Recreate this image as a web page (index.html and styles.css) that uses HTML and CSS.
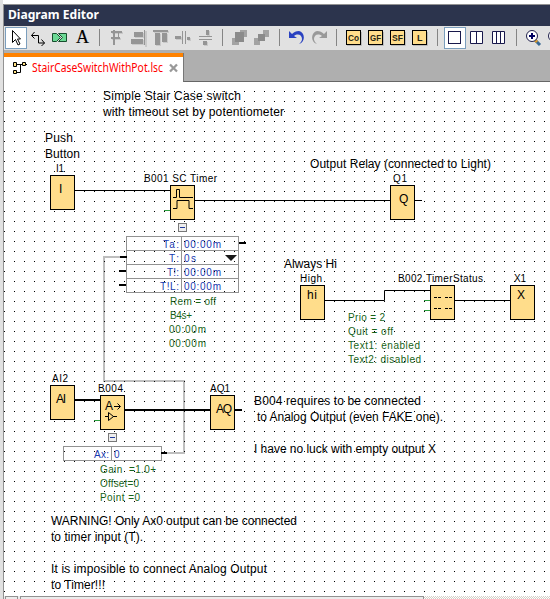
FILE: index.html
```html
<!DOCTYPE html>
<html lang="en">
<head>
<meta charset="utf-8">
<title>Diagram Editor</title>
<link rel="stylesheet" href="styles.css">
</head>
<body>
<main class="window">
  <header class="title"><svg width="120" height="21"><text x="4" y="14" textLength="91" lengthAdjust="spacingAndGlyphs">Diagram Editor</text></svg></header>
  <nav class="toolbar">
    <svg width="546" height="24" viewBox="4 26 546 24">
      <g class="selected"><rect x="5.5" y="27.5" width="21" height="21"/><rect x="444.500" y="27.500" width="21" height="21"/></g>
      <path d="M12.500 30.500V42.500l3-3 2.500 5.500 2-1-2.500-5H20.500z" fill="#fff" stroke="#000"/>
      <path d="M34.500 32l-3 3.500 3 3M31.500 35.500h7v7.500h6M41.500 39.500l3 3.500-3 3" fill="none" stroke="#000"/>
      <path d="M52.500 33.500h4l4 4-4 4h-4zM58.500 33.500h8v8h-8l4-4z" fill="#6bd894" stroke="#174d2d"/>
      <text class="serif" x="76" y="43" textLength="13" lengthAdjust="spacingAndGlyphs">A</text>
      <path class="divider" d="M99.500 29v17M222.500 29v17M279.500 29v17M336.500 29v17M437.500 29v17M516.500 29v17"/>
      <g class="shadow" transform="translate(1 1)"><path d="M134 32h9v5h-9zM131 39h12v5h-12zM144 30h2v16h-2zM153 30h15v2h-15zM155 33h5v12h-5zM162 33h5v9h-5zM175 36h6v3h-6zM187 37h3v3h-3zM206 30h3v5h-3zM203 41h4v4h-4zM111 31h11v2h-11zM111 37h9v2h-9z"/></g>
      <g class="muted">
        <path d="M113 30h2v15h-2zM111 31h11v2h-11zM111 37h9v2h-9zM118 31h1v8h-1z"/>
        <path d="M134 32h9v5h-9zM131 39h12v5h-12zM144 30h1v15h-1z"/>
        <path d="M153 30h15v2h-15zM155 33h5v12h-5zM162 33h5v9h-5z"/>
        <path d="M175 36h6v3h-6zM182 31h1v13h-1zM185 31h1v13h-1zM187 37h3v3h-3z"/>
        <path d="M199 36h13v1h-13zM199 39h13v1h-13zM206 30h3v5h-3zM203 41h4v4h-4z"/>
      </g>
      <g class="stack"><path d="M232 38h7v7h-7zM240 30h7v7h-7z"/><path class="front" d="M235 32h9v10h-9z"/><path d="M254 38h6v7h-6zM263 30h6v7h-6z"/><path class="front" d="M258 34h7v7h-7z"/></g>
      <path d="M289 31v7h8l-3-2c4-3 8-1 8 3 0 2-1 3-3 5 7-2 6-12 0-13-3 0-5 1-7 3z" fill="#2a42c1"/>
      <path d="M327 31v7h-8l3-2c-4-3-8-1-8 3 0 2 1 3 3 5-7-2-6-12 0-13 3 0 5 1 7 3z" fill="#999"/>
      <path class="chip-shadow" d="M347 45.500h14.500V32M369 45.500h14.500V32M391 45.500h14.500V32M413 45.500h14.500V32"/>
      <g class="chip"><rect x="346.500" y="30.500" width="14" height="14"/><rect x="368.500" y="30.500" width="14" height="14"/><rect x="390.500" y="30.500" width="14" height="14"/><rect x="412.500" y="30.500" width="14" height="14"/></g>
      <g class="chip-text"><text x="348" y="41" textLength="11" lengthAdjust="spacingAndGlyphs">Co</text><text x="370" y="41" textLength="11" lengthAdjust="spacingAndGlyphs">GF</text><text x="392" y="41" textLength="11" lengthAdjust="spacingAndGlyphs">SF</text><text x="417" y="41" textLength="5">L</text></g>
      <g class="pages"><rect x="448.500" y="31.500" width="12" height="12"/><path d="M470.500 31.500h12v12h-12zM476.500 31v13M492.500 31.500h12v12h-12zM496.500 31v13M500.500 31v13"/></g>
      <path d="M535 40l5 5" stroke="#396893" stroke-width="3"/><path d="M535 40l2 2" stroke="#dc9a28" stroke-width="3"/>
      <circle cx="532" cy="36" r="5.500" fill="#fff" stroke="#20204b"/><path d="M529 36h6M532 33v6" stroke="#000060" stroke-width="2"/>
      <circle cx="554" cy="36" r="5.500" fill="#fff" stroke="#20204b"/>
    </svg>
  </nav>
  <div class="tabs">
    <div class="tab">
      <svg width="179" height="25" viewBox="4 57 179 25">
        <path d="M15 64.500h10M20.500 64v8.500h-4M21 64.500h6" fill="none" stroke="#000"/>
        <path d="M13.500 62.500h3v4h-3zM22.500 62.500h3v3h-3zM13.500 70.500h3v3h-3z" fill="#ffe080" stroke="#000"/>
        <text x="32" y="72" textLength="131" lengthAdjust="spacingAndGlyphs">StairCaseSwitchWithPot.lsc</text>
        <path d="M170 64.500l7 7M177 64.500l-7 7" stroke="#999" stroke-width="2.300"/>
      </svg>
    </div>
    <div class="tab-space"></div>
  </div>
  <section class="canvas">
    <svg width="546" height="514" viewBox="4 82 546 514">
      <defs><pattern id="dots" x="4" y="1" width="10" height="10" patternUnits="userSpaceOnUse"><rect width="1" height="1"/></pattern></defs>
      <g class="notes">
        <text x="103" y="100" textLength="138">Simple Stair Case switch</text>
        <text x="103" y="116" textLength="181">with timeout set by potentiometer</text>
        <text x="45" y="142" textLength="28">Push</text>
        <text x="45" y="158" textLength="35">Button</text>
        <text x="310" y="168" textLength="181">Output Relay (connected to Light)</text>
        <text x="284" y="268" textLength="53">Always Hi</text>
        <text x="254" y="405" textLength="167">B004 requires to be connected</text>
        <text x="257" y="421" textLength="186">to Analog Output (even FAKE one).</text>
        <text x="254" y="453" textLength="182">I have no luck with empty output X</text>
        <text x="51" y="525" textLength="246">WARNING! Only Ax0 output can be connected</text>
        <text x="51" y="541" textLength="92">to timer input (T).</text>
        <text x="51" y="573" textLength="216">It is imposible to connect Analog Output</text>
        <text x="51" y="589" textLength="54">to Timer!!!</text>
      </g>
      <g class="labels">
        <text x="56" y="172" textLength="8">I1</text><text x="144" y="182" textLength="73">B001 SC Timer</text>
        <text x="393" y="182" textLength="14">Q1</text><text x="300" y="282" textLength="22">High</text>
        <text x="398" y="282" textLength="85">B002.TimerStatus</text><text x="514" y="282" textLength="12">X1</text>
        <text x="52" y="382" textLength="16">AI2</text><text x="98" y="392" textLength="25">B004</text><text x="210" y="392" textLength="20">AQ1</text>
      </g>
      <g class="properties">
        <text x="170" y="305" textLength="46">Rem = off</text><text x="170" y="319" textLength="22">B4s+</text>
        <text x="169" y="333" textLength="37">00:00m</text><text x="169" y="347" textLength="37">00:00m</text>
        <text x="348" y="321" textLength="37">Prio = 2</text><text x="348" y="335" textLength="45">Quit = off</text>
        <text x="348" y="349" textLength="72">Text1: enabled</text><text x="348" y="363" textLength="73">Text2: disabled</text>
        <text x="100" y="473" textLength="56" xml:space="preserve">Gain  =1.0+</text><text x="100" y="487" textLength="39">Offset=0</text><text x="100" y="501" textLength="40">Point =0</text>
      </g>
      <path class="link" d="M122 257H104V381H184V453H167"/>
      <g class="table"><rect x="126.500" y="236.500" width="112" height="56"/><path d="M126 250.500h113M126 264.500h113M126 278.500h113M181.500 236v57"/><rect x="63.500" y="446.500" width="98" height="14"/><path d="M111.500 446v15"/></g>
      <g class="values">
        <text x="163" y="248" textLength="16">Ta:</text><text x="184" y="248" textLength="37">00:00m</text>
        <text x="169" y="262" textLength="10">T:</text><text x="184" y="262" textLength="12">0s</text>
        <text x="167" y="276" textLength="12">T!:</text><text x="184" y="276" textLength="37">00:00m</text>
        <text x="160" y="290" textLength="19">T!L:</text><text x="184" y="290" textLength="37">00:00m</text>
        <text x="94" y="458" textLength="15">Ax:</text><text x="114" y="458">0</text>
      </g>
      <rect x="4" y="82" width="546" height="514" fill="url(#dots)"/>
      <path d="M225 255h12l-6 6z" fill="#181818"/>
      <path class="wire" d="M75 190.500h95M195 200.500h195M415 200.500h7M325 300.500h59.500v-10H430M455 300.500h55"/>
      <path class="bus" d="M75 400h25M125 410h85M235 410h7M239 243h7M120 257h7M119 271h7M119 285h7M161 453h6"/>
      <path class="trigger" d="M164 210.500h6M424 300.500h6M424 310.500h6M94 420.500h6"/>
      <g class="block">
        <rect x="50.500" y="175.500" width="24" height="34"/><rect x="170.500" y="185.500" width="24" height="34"/><rect x="390.500" y="185.500" width="24" height="34"/>
        <rect x="300.500" y="285.500" width="24" height="34"/><rect x="430.500" y="285.500" width="24" height="34"/><rect x="510.500" y="285.500" width="24" height="34"/>
        <rect x="50.500" y="385.500" width="24" height="34"/><rect x="100.500" y="395.500" width="24" height="34"/><rect x="210.500" y="395.500" width="24" height="34"/>
      </g>
      <path class="wire" d="M173 197.500h3.500v-8h3v8H193M173 208.500h4v-8h12v8h4M434 297.500h3M438 297.500h3M445 297.500h3M449 297.500h3M434 308.500h3M438 308.500h3M445 308.500h3M449 308.500h3"/>
      <path d="M114 406.500h6M117.500 403.500l3 3-3 3M105 416.500h3.500v-4l5 4-5 4v-4M113 416.500h4" fill="none" stroke="#000"/>
      <g class="symbols"><text x="59" y="193">I</text><text x="399" y="203">Q</text><text x="307" y="299" textLength="10">hi</text><text x="517" y="299">X</text><text x="56" y="403" textLength="10">AI</text><text x="105" y="410" textLength="8">A</text><text x="216" y="413" textLength="16">AQ</text></g>
      <g class="collapse"><rect x="178.500" y="223.500" width="8" height="8"/><rect x="108.500" y="433.500" width="8" height="8"/><path d="M180 227.500h5M110 437.500h5"/></g>
    </svg>
  </section>
  <footer class="scrollbar"><span class="arrow"></span><span class="thumb"></span><span class="track"></span></footer>
</main>
</body>
</html>
```
FILE: styles.css
```css
* { box-sizing: border-box; }
body { margin: 0; overflow: hidden; background: #fff; }
svg { display: block; font-family: "Liberation Sans", sans-serif; }
.window { width: 550px; height: 599px; padding-top: 4px; display: flex; flex-direction: column; border-left: 3px solid #e1e1e1; background: #fff; }
.window > * { border-left: 1px solid #929292; flex-shrink: 0; }
.title { height: 22px; border-top: 1px solid #929292; background: #2c344d; }
.title text { fill: #fff; font: bold 13px "Noto Sans", sans-serif; }
.toolbar { height: 24px; background: #e1e1e1; }
.tabs { height: 32px; padding-top: 3px; display: flex; background: #afafaf; }
.tab { width: 179px; border-top: 4px solid #ff8200; background: #fff; }
.tab text { fill: #f00; font: 12px "Noto Sans", sans-serif; }
.tab-space { flex: 1; border-left: 1px solid #777; border-bottom: 1px solid #666; }
.canvas { height: 514px; }
.scrollbar { height: 3px; display: flex; padding-left: 1px; background: #ececec; }
.arrow { width: 13px; margin-right: 2px; border: 1px solid #929292; border-bottom: 0; }
.thumb { width: 404px; border: 1px solid #929292; border-bottom: 0; }
.track { flex: 1; background: repeating-conic-gradient(#d4d0c8 0 25%, #fff 0 50%) 0 0 / 2px 2px; }
.selected { fill: #fff; stroke: #7b9ebd; }
.serif { font: 18px "Liberation Serif", serif; stroke: #000; stroke-width: .2; }
.divider { stroke: #858585; }
.muted { fill: #959595; }
.shadow { fill: #c9c9c9; }
.stack { fill: #a3a3a3; }
.front { fill: #8b8b8b; }
.chip { fill: #ffdd8b; stroke: #000; }
.chip-shadow { fill: none; stroke: #bbb; }
.chip-text { font: bold 9px "Liberation Sans", sans-serif; fill: #262615; }
.pages { fill: #fff; stroke: #18184b; }
.notes { font-size: 12px; }
.labels, .properties, .values { font: 10px "Liberation Sans", sans-serif; }
.properties { fill: #176417; }
.values { fill: #1939af; }
.link { fill: none; stroke: #bebebe; stroke-width: 2; }
.table { fill: none; stroke: #929292; }
.wire { fill: none; stroke: #000; }
.bus { stroke: #000; stroke-width: 2; }
.trigger { stroke: #299b3a; }
.block { fill: #ffdd8b; stroke: #000; }
.symbols { font: 12px "Liberation Sans", sans-serif; }
.collapse { fill: #eee; stroke: #777; }
.collapse path { stroke: #213b9c; }
```
